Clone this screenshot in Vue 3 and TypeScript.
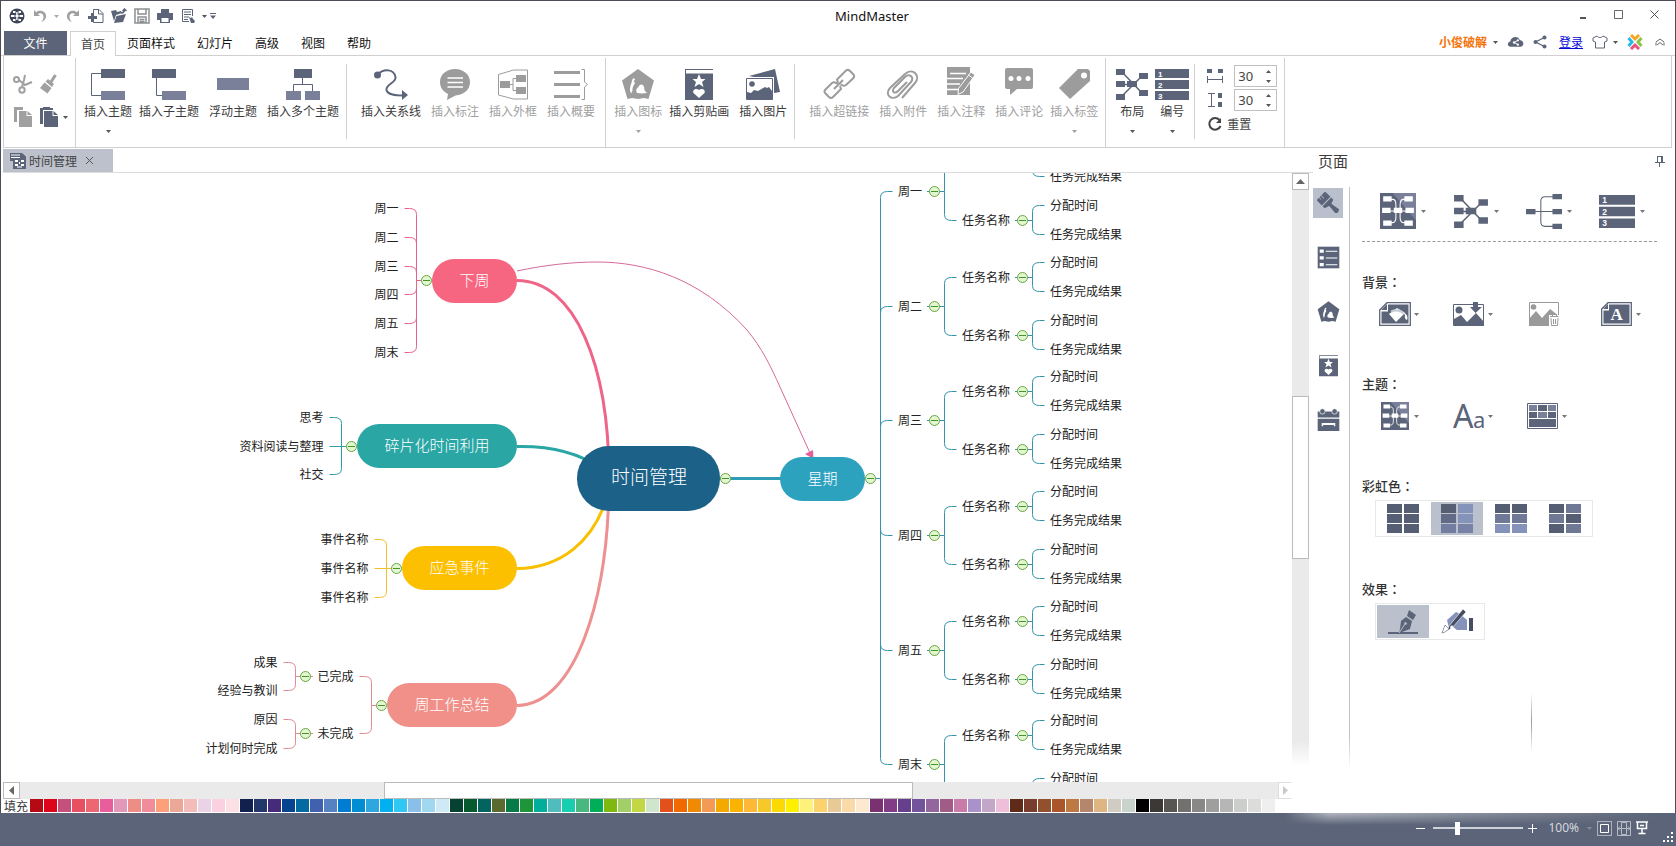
<script setup lang="ts">
import { h, ref } from 'vue'

interface Tool { label: string; icon: string; off?: boolean; drop?: boolean }
interface Group { tools: Tool[]; full: boolean; lead: 'wide' | 'slim' | 'mid' }
interface Label { x: number; y: number; text: string; end?: boolean }

const lettered: Record<string, { box: string; texts: [number, number, string, string, number][] }> = {
  numbering: { box: '0 0 34 34', texts: [
    [3, 9.5, '1', 'Liberation Sans', 8], [3, 20.5, '2', 'Liberation Sans', 8], [3, 31.5, '3', 'Liberation Sans', 8],
  ] },
  watermark: { box: '0 0 32 24', texts: [[9.5, 18, 'A', 'Liberation Serif', 17]] },
  fonts: { box: '0 0 32 28', texts: [[0, 26, 'A', 'Noto Sans', 32], [20, 26, 'a', 'Noto Sans', 22]] },
}

// An icon from the symbol sheet, with its letters drawn on top where it has any.
const Glyph = (props: { name: string }) => {
  const info = lettered[props.name]
  if (!info) return h('svg', {}, [h('use', { href: '#' + props.name })])
  const solo = props.name === 'fonts'
  return h('svg', { viewBox: info.box }, [
    solo ? null : h('use', { href: '#' + props.name }),
    ...info.texts.map(([x, y, text, family, size]) => h('text', {
      x, y, fill: solo ? 'currentColor' : '#fff', 'font-family': family + ', sans-serif', 'font-size': size,
      'font-weight': solo ? 400 : 700,
    }, text)),
  ])
}
Glyph.props = ['name']

const menus = ['首页', '页面样式', '幻灯片', '高级', '视图', '帮助']
const active = ref('首页')

const groups: Group[] = [
  { full: false, lead: 'slim', tools: [
    { label: '插入主题', icon: 'topic', drop: true },
    { label: '插入子主题', icon: 'subtopic' },
    { label: '浮动主题', icon: 'floating' },
    { label: '插入多个主题', icon: 'multi' },
  ] },
  { full: true, lead: 'wide', tools: [
    { label: '插入关系线', icon: 'relation' },
    { label: '插入标注', icon: 'callout', off: true },
    { label: '插入外框', icon: 'boundary', off: true },
    { label: '插入概要', icon: 'summary', off: true },
  ] },
  { full: false, lead: 'slim', tools: [
    { label: '插入图标', icon: 'mark', off: true, drop: true },
    { label: '插入剪贴画', icon: 'clipart' },
    { label: '插入图片', icon: 'picture' },
  ] },
  { full: true, lead: 'wide', tools: [
    { label: '插入超链接', icon: 'link', off: true },
    { label: '插入附件', icon: 'clip', off: true },
    { label: '插入注释', icon: 'note', off: true },
    { label: '插入评论', icon: 'comment', off: true },
    { label: '插入标签', icon: 'tag', off: true, drop: true },
  ] },
  { full: false, lead: 'mid', tools: [
    { label: '布局', icon: 'layout', drop: true },
    { label: '编号', icon: 'numbering', drop: true },
  ] },
]

const spacingX = ref('30')
const spacingY = ref('30')
const bump = (v: string, d: number) => String(Number(v) + d)
const zoom = ref(20)

const quick = ['undo', 'caret', 'redo', 'newdoc', 'open', 'save', 'print', 'export', 'caret', 'more']
const quickNames = ['撤销', '撤销列表', '重做', '新建', '打开', '保存', '打印', '导出', '导出选项', '自定义']
const quickOff = (i: number) => i < 3

const strip = [
  { icon: 'brush', name: '页面' }, { icon: 'outline', name: '大纲' }, { icon: 'mark', name: '图标' },
  { icon: 'clipart', name: '剪贴画' }, { icon: 'calendar', name: '任务' },
]
const layoutTools = [
  { icon: 'map-tile', name: '样式' }, { icon: 'layout', name: '布局' },
  { icon: 'connector', name: '连接线' }, { icon: 'numbering', name: '编号' },
]
const backTools = [
  { icon: 'bg-fill', name: '背景颜色', drop: true }, { icon: 'bg-image', name: '背景图片', drop: true },
  { icon: 'bg-remove', name: '删除背景', drop: false }, { icon: 'watermark', name: '水印', drop: true },
]
const themeTools = [
  { icon: 'map-tile', name: '主题' }, { icon: 'fonts', name: '主题字体' }, { icon: 'theme-colors', name: '主题颜色' },
]
const D = '#555e73'
const M = '#6f7894'
const L = '#8592b9'
const rainbow = [
  [D, D, D, D, D, D], [D, L, '#626b86', L, '#737da0', '#7782a6'],
  [D, D, M, M, L, L], [D, M, M, D, D, M],
]
const rainbowOn = ref(1)
const effectOn = ref(0)

const palette = [
  'b50a14', 'dc0519', 'c5507c', 'e85062', 'ec6772', 'e85d9c', 'e397b9', 'ee8c86', 'f18d9a', 'fd9f78', 'eca897', 'f4bcb8', 'ead3e6', 'fbd0e0', 'fde0e6',
  '10214f', '22386b', '452b79', '05448f', '036aa2', '4160ae', '5681c2', '007cd2', '008dd2', '2ea7e0', '00b0f0', '31c7f4', '8abfea', 'a0d8f0', 'cdeaf6',
  '064232', '075a2d', '03635f', '5b6b30', '067a47', '1d963a', '00ae9c', '50bcbe', '16cfae', '48b880', '00ae57', '7fb80e', 'a3cf68', 'c1d743', 'cfe6cc',
  'e3501a', 'f06a00', 'f08a05', 'f39a55', 'f4a900', 'fab300', 'fdb936', 'f6c829', 'fcd900', 'fff000', 'fff27b', 'fbd26b', 'e8ca97', 'fbdaaa', 'fde9cf',
  '7a3071', '823c86', '66408f', '73549a', '93679d', 'a05b86', 'c97caa', 'aa91ca', 'c3a6c8', 'eebfd8',
  '602a19', '783d2c', '93502c', 'ab562a', 'bd7941', 'b5866b', 'dfb682', 'd0ccc3', 'c7d3cb',
  '000000', '3b3835', '575653', '72716f', '888886', '9f9f9e', 'b5b6b5', 'cbcecb', 'dcdddb', 'efefef',
].map(c => '#' + c)

const lines: { d: string; c: string }[] = []
const labels: Label[] = []
const toggles: { x: number; y: number }[] = []
const snap = (y: number) => Math.floor(y) + 0.5

function branch(trunk: number, from: number, ys: number[], dir: number, c: string, stub: number) {
  let d = `M${stub} ${from}H${trunk}`
  for (const y of ys) {
    d += y === from
      ? `M${trunk} ${y}H${trunk + dir * 12}`
      : `M${trunk} ${from}V${y + (from > y ? 6 : -6)}Q${trunk} ${y} ${trunk + dir * 7} ${y}H${trunk + dir * 12}`
  }
  lines.push({ d, c })
}
function leftLeaves(trunk: number, from: number, ys: number[], names: string[], c: string) {
  branch(trunk, from, ys, -1, c, trunk + 10)
  names.forEach((text, i) => labels.push({ x: trunk - 18, y: ys[i], text, end: true }))
  toggles.push({ x: trunk + 10, y: from })
}

leftLeaves(416.5, 280.5, [208.5, 237.5, 266.5, 294.5, 323.5, 352.5], ['周一', '周二', '周三', '周四', '周五', '周末'], '#e8638a')
leftLeaves(341.5, 446.5, [417.5, 446.5, 474.5], ['思考', '资料阅读与整理', '社交'], '#2f9ea6')
leftLeaves(386.5, 568.5, [539.5, 568.5, 597.5], ['事件名称', '事件名称', '事件名称'], '#f2c029')
leftLeaves(371.5, 705.5, [676.5, 733.5], ['已完成', '未完成'], '#e08a94')
leftLeaves(295.5, 676.5, [662.5, 690.5], ['成果', '经验与教训'], '#e08a94')
leftLeaves(295.5, 733.5, [719.5, 748.5], ['原因', '计划何时完成'], '#e08a94')
lines.push({ d: 'M304 676.5H313M304 733.5H313', c: '#e08a94' })

const teal = '#3494ac'
const dayNames = ['周一', '周二', '周三', '周四', '周五', '周末']
const dayYs = dayNames.map((_, i) => snap(191.4 + i * 114.7))
branch(880.5, 478.5, dayYs, 1, teal, 866)
toggles.push({ x: 870.5, y: 478.5 }, { x: 725.5, y: 478.5 })
dayNames.forEach((text, i) => {
  const y = dayYs[i]
  labels.push({ x: 898, y, text })
  toggles.push({ x: 934.5, y })
  const tasks = [snap(y - 28.7), snap(y + 28.7)]
  branch(944.5, y, tasks, 1, teal, 927)
  tasks.forEach(t => {
    labels.push({ x: 962, y: t, text: '任务名称' })
    toggles.push({ x: 1022.5, y: t })
    const leaves = [snap(t - 14.6), snap(t + 14.3)]
    branch(1032.5, t, leaves, 1, teal, 1015)
    labels.push({ x: 1050, y: leaves[0], text: '分配时间' }, { x: 1050, y: leaves[1], text: '任务完成结果' })
  })
})

const topics = [
  { x: 432, y: 259, w: 85, text: '下周', c: '#f76681' },
  { x: 357, y: 424, w: 160, text: '碎片化时间利用', c: '#2aa6a5' },
  { x: 402, y: 546, w: 115, text: '应急事件', c: '#fdc000' },
  { x: 387, y: 683, w: 130, text: '周工作总结', c: '#f09089' },
  { x: 780, y: 457, w: 85, text: '星期', c: '#2da2bf' },
]
</script>

<template>
  <div class="window">
    <svg class="defs" width="0" height="0" aria-hidden="true">
      <symbol id="caret" viewBox="0 0 5 3"><path d="M0 0h5L2.5 3z" fill="currentColor" /></symbol>
      <symbol id="logo" viewBox="0 0 16 16">
        <circle cx="8" cy="8" r="7.5" fill="#3f4657" />
        <g fill="#fff"><path d="M4 3h2.500v2H4zM9.500 3H12v2H9.500zM2 7h3v2H2zM11 7h3v2h-3zM4 11h2.500v2H4zM9.500 11H12v2H9.500z" /><path d="M7 4h.8v3h.6V4h.8v3.500H11v1H9.200V12h-.8V9h-.6v3H7V8.500H5v-1h2z" /></g>
      </symbol>
      <symbol id="undo" viewBox="0 0 16 16"><path d="M2 2v6h6L5.800 6C9 4 12 6 11.500 9.500c-.2 1.800-1 3.300-2.500 4.500 3.500-1 5.500-3.600 5-6.800C13.300 3 8 1.200 4.200 4.200z" fill="currentColor" /></symbol>
      <symbol id="redo" viewBox="0 0 16 16"><path d="M14 2v6H8l2.200-2C7 4 4 6 4.500 9.500c.2 1.800 1 3.300 2.500 4.500-3.500-1-5.500-3.600-5-6.800C2.700 3 8 1.200 11.800 4.200z" fill="currentColor" /></symbol>
      <symbol id="newdoc" viewBox="0 0 16 16"><path d="M5.500 6V1.500H11l4 4v9H5.500V13M10.500 1.500V6H15" fill="none" stroke="currentColor" /><path d="M3 5h3v3h3v3H6v3H3v-3H0V8h3z" fill="currentColor" /></symbol>
      <symbol id="open" viewBox="0 0 16 16"><path d="M0 3l5-1 1 2 4-1 1 2-6 2-2 6z M5.500 8L15 6l-3 8-9 1z" fill="currentColor" /><path d="M10 5c2.500 0 3.500-1.500 3.500-3.500M11.500 3l2-2L15.500 3" fill="none" stroke="currentColor" stroke-width="1.500" /></symbol>
      <symbol id="save" viewBox="0 0 16 16"><path d="M1 1h14v14H1zM4 1v5h8V1M4 15V9h8v6M5.500 11.500h5M5.500 13.500h5" fill="none" stroke="#8d8f90" stroke-width="1.500" /></symbol>
      <symbol id="print" viewBox="0 0 16 16"><path d="M4 1h8v4h4v7h-3v3H3v-3H0V5h4z" fill="currentColor" /><path d="M4.500 10h7v4h-7z" fill="#fff" /></symbol>
      <symbol id="export" viewBox="0 0 16 16"><path d="M12.500 8V1.500h-10v12H9M4 4h7M4 6.500h7M4 9h5M4 11.500h4" fill="none" stroke="currentColor" /><path d="M9 9l2 1 1-1 1 2 2 2-1 2h-3z" fill="currentColor" /></symbol>
      <symbol id="more" viewBox="0 0 6 6"><path d="M0 0h6v1H0zM0 2.500h6L3 6z" fill="currentColor" /></symbol>

      <symbol id="cut" viewBox="0 0 20 20"><g fill="none" stroke="currentColor" stroke-width="2"><circle cx="3.500" cy="5.500" r="2.500" /><circle cx="9" cy="16" r="2.700" /><path d="M6 6l6 5 7-3M9 13l2-7 1-5" /></g></symbol>
      <symbol id="paint" viewBox="0 0 20 20"><path d="M16.500 1L12 8" stroke="currentColor" stroke-width="3" /><path d="M6.500 7.500L9 5l6 5-2 3zM5.500 8.500l7 5.500-4 5.500L1 14z" fill="currentColor" /></symbol>
      <symbol id="copy" viewBox="0 0 20 20"><path d="M1 0h9v3H4v12H1z" fill="currentColor" /><path d="M6 4h7.500v5H19v11H6z" fill="currentColor" /><path d="M14.500 4L19 8h-4.500z" fill="currentColor" /></symbol>
      <symbol id="paste" viewBox="0 0 20 20"><path d="M1 1h3V0h7v1h3v2H4v14H1z" fill="currentColor" /><path d="M5 4h8.500v5H19v11H5z" fill="currentColor" /><path d="M14.500 4L19 8h-4.500z" fill="currentColor" /></symbol>

      <symbol id="topic" viewBox="0 0 34 34"><path d="M10 6.500H.5v22H10" fill="none" stroke="currentColor" /><path d="M10 2h24v9H10z" fill="currentColor" /><path d="M10 24h24v9H10z" fill="#7a809a" /></symbol>
      <symbol id="subtopic" viewBox="0 0 34 34"><path d="M4.500 10v18.500H11" fill="none" stroke="currentColor" /><path d="M0 2h24v9H0z" fill="currentColor" /><path d="M10 24h24v9H10z" fill="#7a809a" /></symbol>
      <symbol id="floating" viewBox="0 0 34 34"><path d="M1 11h32v12H1z" fill="#7a809a" /></symbol>
      <symbol id="multi" viewBox="0 0 34 34"><path d="M16.500 10v7M7.500 25v-7.500h19V25" fill="none" stroke="currentColor" /><path d="M8 2h18v9H8z" fill="currentColor" /><path d="M0 24h15v9H0zM19 24h15v9H19z" fill="#7a809a" /></symbol>
      <symbol id="relation" viewBox="0 0 34 34"><circle cx="3.500" cy="8" r="3.500" fill="currentColor" /><path d="M3 8C10 1 20 2 21.500 10c1 6-10 7-9 13 1 5 9 5.500 17 5.500" fill="none" stroke="currentColor" stroke-width="2" /><path d="M28 23l6 5-6 5z" fill="currentColor" /></symbol>
      <symbol id="callout" viewBox="0 0 34 34"><path d="M17 2c8.500 0 15 5.500 15 13 0 8-6.500 13-14.500 13.500L9 33l1-6C5 24.500 2 20.500 2 15 2 7.500 8.500 2 17 2z" fill="currentColor" /><path d="M9.500 11H25M9.500 15.500H25M9.500 20H25" stroke="#fff" stroke-width="1.500" /></symbol>
      <symbol id="boundary" viewBox="0 0 34 34"><path d="M2.500 7.500l15-4.500h14v29h-14l-15-4zM13 17.500h4M20 11.500h-3v12h3" fill="none" stroke="currentColor" /><path d="M4 14h10v7H4zM20 8h10v7H20zM20 20h10v7H20z" fill="currentColor" /></symbol>
      <symbol id="summary" viewBox="0 0 34 34"><path d="M0 4h26v3H0zM0 16h26v3H0zM0 28h26v3H0z" fill="currentColor" /><path d="M27.500 2.500h3V15l3 2.500-3 2.500v12.500h-3" fill="none" stroke="currentColor" /></symbol>
      <symbol id="mark" viewBox="0 0 34 34"><path d="M17 2l16 11.500L27.500 32l-4.500-1-6 1-6-1-4.500 1L1 13.500z" fill="currentColor" /><path d="M11 13.500q1-3.500 3-1.500-.5 2-1.500 2 2 1 1 3-1.500 2-2 4.500.5 3-1.500 5-2-4-.5-8 1-2 1.500-5zM16 26c-1.500-3-.5-4.500 1.500-6 .5-3.500 5-3.500 5.500 0 .5 1.500 0 3 1 4l2 2-5 .5z" fill="#fff" /></symbol>
      <symbol id="clipart" viewBox="0 0 34 34"><path d="M3 2h28v1H4v3.500h27V33H3z" fill="currentColor" /><path d="M17 7l2 5h4.500L20 15l1.500 5-4.500-3-4.500 3L14 15l-3.500-3H15zM17 31l-5.500-5c-1.500-3 2.500-5.500 5.500-3 3-2.500 7 0 5.500 3z" fill="#fff" /></symbol>
      <symbol id="picture" viewBox="0 0 34 34"><path d="M3 9l26-7 5 23-6 1V10H8z" fill="currentColor" /><path d="M.5 11.500h26v21H.5z" fill="#fff" stroke="currentColor" /><circle cx="6" cy="17" r="2.800" fill="currentColor" /><path d="M1 25l4 1 3-3 4 1 7-4 2 1 2-1 3 4v8H1z" fill="currentColor" /></symbol>
      <symbol id="link" viewBox="0 0 34 34"><g fill="none" stroke="currentColor" stroke-width="2"><path d="M16 15.500l-1-3L24 3.500q2-1.500 4 .5l3 3q2 2 .5 4L24 18q-2 1.500-4 0l-1.500-.5M18 19l1 3-8 8q-2 2-4 0l-3.500-3.500q-2-2 0-4L10 16q2-1.500 4 0l2 .5M12 22l9-9" /></g></symbol>
      <symbol id="clip" viewBox="0 0 34 34"><path d="M16 31L29 16c6-7-2-16-10-9L4 21c-6 7 2 13 8 8l13-14c4-5-2-9-6-5L8 21c-3 4 1 6 4 3l9-9" fill="none" stroke="currentColor" stroke-width="2" /></symbol>
      <symbol id="note" viewBox="0 0 34 34"><path d="M3 0h23v28H3z" fill="currentColor" /><path d="M6 6.500h16M3 11.500h16M3 17h13M3 22.500h12" stroke="#fff" stroke-width="1.500" /><path d="M27 5l4 3-12 17-5 2.500.5-6z" fill="currentColor" stroke="#fff" /><path d="M24.500 8l4 3" stroke="#fff" /></symbol>
      <symbol id="comment" viewBox="0 0 34 34"><path d="M5 1h24q2 0 2 2v17q0 2-2 2H15l-7 6v-6H5q-2 0-2-2V3q0-2 2-2z" fill="currentColor" /><g fill="#fff"><circle cx="9" cy="11.500" r="2.500" /><circle cx="17" cy="11.500" r="2.500" /><circle cx="26" cy="11.500" r="2.500" /></g></symbol>
      <symbol id="tag" viewBox="0 0 34 34"><path d="M21 2h10l2 2v10L13 32 2 21z" fill="currentColor" /><circle cx="27" cy="8.500" r="3" fill="#fff" /></symbol>
      <symbol id="layout" viewBox="0 0 34 34"><path d="M7 5l20 21M7 29L27 9M8 17.500h10" fill="none" stroke="currentColor" stroke-width="1.500" /><path d="M1 2h9v6H1zM1 14h9v6H1zM1 27h9v6H1zM12 14h10v6H12zM24 6h9v6h-9zM24 23h9v6h-9z" fill="currentColor" /></symbol>
      <symbol id="numbering" viewBox="0 0 34 34"><path d="M0 2h34v9H0zM0 13h34v9H0zM0 24h34v9H0z" fill="currentColor" /></symbol>
      <symbol id="space-x" viewBox="0 0 16 16"><path d="M0 1h5v4H0zM11 1h5v4h-5z" fill="currentColor" /><path d="M.5 8v7M15.500 8v7M0 11.500h16" stroke="currentColor" fill="none" /></symbol>
      <symbol id="space-y" viewBox="0 0 16 16"><path d="M11 1h4v5h-4zM11 10h4v5h-4z" fill="currentColor" /><path d="M1 1.500h7M1 14.500h7M4.500 1v13" stroke="currentColor" fill="none" /></symbol>
      <symbol id="reset" viewBox="0 0 16 16"><path d="M12.500 4A5.800 5.800 0 1 0 13.500 10" fill="none" stroke="currentColor" stroke-width="2" /><path d="M14 2v5H9z" fill="currentColor" /></symbol>

      <symbol id="cloud" viewBox="0 0 18 14"><path d="M4 12C0 12 0 7 3.500 6.500 4 1 12 0 13.500 5c5 .5 5 7 .5 7z" fill="currentColor" /><path d="M7.500 7.500l4-2.200M7.500 7.500l4 2.200" stroke="#fff" /><g fill="#fff"><circle cx="7.500" cy="7.500" r="1.300" /><circle cx="11.500" cy="5.200" r="1.200" /><circle cx="11.500" cy="9.800" r="1.200" /></g></symbol>
      <symbol id="share" viewBox="0 0 14 14"><path d="M11.500 2.500L2.500 7l9 4.500" fill="none" stroke="currentColor" stroke-width="1.300" /><g fill="currentColor"><circle cx="11.500" cy="2.500" r="2" /><circle cx="2.500" cy="7" r="2" /><circle cx="11.500" cy="11.500" r="2" /></g></symbol>
      <symbol id="shirt" viewBox="0 0 16 14"><path d="M5 1c1.500 2 4.500 2 6 0l4 2v3l-2.500 1v6h-9V7L1 6V3z" fill="none" stroke="currentColor" stroke-linejoin="round" /></symbol>
      <symbol id="brand" viewBox="0 0 16 16"><g fill="none" stroke-width="3"><path d="M4 1l4 4 4-4" stroke="#f5a623" /><path d="M1.500 4L5 8l-3.500 4" stroke="#29b6e8" /><path d="M14.500 4L11 8l3.500 4" stroke="#8bc34a" /><path d="M4 15l4-4 4 4" stroke="#e8517c" /></g></symbol>
      <symbol id="pin" viewBox="0 0 10 12"><path d="M2.500 1v6.500M2 1.500h5M0 7.500h10M4.500 8v4" stroke="currentColor" fill="none" /><path d="M6 1h2v7H6z" fill="currentColor" /></symbol>
      <symbol id="doc" viewBox="0 0 16 16"><path d="M0 0h12l4 3.500V16H3V8H0z" fill="currentColor" /><path d="M1 1.500h9v1H1zM1 4h9v1H1zM5 7h3v2H5zM11 7h3v2h-3zM5 11h3v2H5zM11 11h3v2h-3zM7 13.500h5v1H7zM9 9h1v2H9z" fill="#fff" /></symbol>

      <symbol id="brush" viewBox="0 0 34 34"><g transform="rotate(-45 17 17)" fill="currentColor"><path d="M8 1h5v4h1V1h3v6h1V1h8v11H8zM8 13.500h18V18l-6 2v2l2 12q-5 4-8 0l1-12v-2l-7-2z" /></g></symbol>
      <symbol id="outline" viewBox="0 0 34 34"><path d="M1 1h32v32H1z" fill="currentColor" /><path d="M4 5h6v5H4zM4 15h6v5H4zM4 25h6v5H4zM13 7h17v1.500H13zM13 17h17v1.500H13zM13 27h17v1.500H13z" fill="#fff" /></symbol>
      <symbol id="calendar" viewBox="0 0 34 34"><path d="M1 5h32v9H1zM1 16h32v18H1z" fill="currentColor" /><g fill="currentColor" stroke="#fff"><circle cx="8" cy="5" r="4" /><circle cx="26" cy="5" r="4" /></g><path d="M7 22h20v5h-2v-2H9v2H7z" fill="#fff" /></symbol>
      <symbol id="map-tile" viewBox="0 0 34 34"><path d="M0 0h34v34H0z" fill="#5b6478" /><path d="M12 0h22v26z" fill="#7a809a" /><path d="M7 6h5q3 0 3 5v12q0 5-3 5H7M27 6h-5q-3 0-3 5v12q0 5 3 5h5M7 17h20" fill="none" stroke="#fff" /><path d="M3 3h8v5H3zM23 3h8v5h-8zM2 14h8v5H2zM24 14h8v5h-8zM3 26h8v5H3zM23 26h8v5h-8zM13 14h8v5h-8z" fill="#fff" /></symbol>
      <symbol id="connector" viewBox="0 0 34 34"><path d="M8 17.500h18M26 3.500h-8q-4 0-4 4v20q0 4 4 4h8" fill="none" stroke="currentColor" /><path d="M0 15h9v5H0zM25 1h9v5h-9zM25 15h9v5h-9zM25 29h9v5h-9z" fill="currentColor" /></symbol>
      <symbol id="bg-fill" viewBox="0 0 32 24"><path d="M.7 8L8 .7h23.300v22.600H.7z" fill="#fff" stroke="currentColor" stroke-width="1.300" /><path d="M9 2.500h20.500v19H2.500V9.500H9zM8 2v6H2z" fill="currentColor" /><path d="M10 12l8-6 8 5-9 9z" fill="#fff" /><path d="M12 9.500q8-3 13 2" fill="none" stroke="#c5cad4" stroke-width="2" /><path d="M24 10q6 3 4 8-3-1-2-5z" fill="#fff" /></symbol>
      <symbol id="bg-image" viewBox="0 0 32 24"><path d="M.5 2.500h30v21H.5z" fill="none" stroke="currentColor" /><circle cx="6" cy="8" r="3.500" fill="currentColor" /><path d="M1 17l7-4 6 7 9-9 8 9v4H1zM20 0h5v5h4l-6.500 6L17 5h3z" fill="currentColor" /></symbol>
      <symbol id="bg-remove" viewBox="0 0 32 24"><g color="#9a9a9a"><path d="M2.500.5h29v22h-29z" fill="none" stroke="currentColor" /><circle cx="6.500" cy="5" r="2.800" fill="currentColor" /><path d="M2 17l7-8 6 7 8-9 9 7v10H2z" fill="currentColor" /><path d="M22 13h10v11H22z" fill="#fff" /><path d="M23 14.500h8.500M25.500 14v-1.500h4V14M24 16l.5 7.500h6L31 16M26.500 17v5M28.500 17v5" fill="none" stroke="currentColor" /></g></symbol>
      <symbol id="watermark" viewBox="0 0 32 24"><path d="M.7 7L7 .7h23.300v22.600H.7z" fill="#fff" stroke="currentColor" stroke-width="1.300" /><path d="M8 2.500h20.500v19H2.500V8.500H8zM7 2v5H2z" fill="currentColor" /></symbol>
      <symbol id="theme-colors" viewBox="0 0 32 28"><path d="M.5 1.500h30v25H.5z" fill="#fff" stroke="currentColor" /><path d="M11 3h9v6h-9zM2 10h8v6H2zM21 10h8v6h-8zM2 17h27v8H2z" fill="currentColor" /><path d="M2 3h8v6H2zM21 3h8v6h-8zM11 10h9v6h-9z" fill="#7a809a" /></symbol>
      <symbol id="pen" viewBox="0 0 32 26"><path d="M1 23h30v2H1z" fill="currentColor" /><path d="M22 1l7 5-3 5-6-4zM19 8l6 4-2 8-8 3-3 1 1-4 1-8z" fill="currentColor" /><path d="M12 24l6-9" stroke="#bbc0cd" /><circle cx="18.500" cy="14.500" r="1.300" fill="#bbc0cd" /></symbol>
      <symbol id="hand" viewBox="0 0 32 26"><path d="M6 11l9-8 4 2 7 6v10H16l-4-3-4 1z" fill="#8592b9" /><path d="M22 0l3 3L11 19l-5 3 2-5z" fill="#454d62" stroke="#fff" stroke-width=".6" /><path d="M1 24l3-8 4 4-4 3z" fill="#fff" stroke="#7a809a" stroke-width=".8" /><path d="M9 18l2-2 2 3-3 2z" fill="#fff" /><path d="M28 9h4v13h-4z" fill="#454d62" /></symbol>
    </svg>

    <header class="titlebar">
      <div class="quick">
        <svg class="i16"><use href="#logo" /></svg>
        <button v-for="(q, i) in quick" :key="i" :class="['flat', q, { faded: quickOff(i) }]" :aria-label="quickNames[i]">
          <svg :class="q === 'caret' ? 'arrow' : q === 'more' ? 'i6' : 'i16'"><use :href="'#' + q" /></svg>
        </button>
      </div>
      <h1>MindMaster</h1>
      <div class="winctl">
        <button class="flat" aria-label="最小化"><svg width="11" height="11"><path d="M3 8h6v2H3z" fill="#555" /></svg></button>
        <button class="flat" aria-label="最大化"><svg width="11" height="11"><path d="M1.500 1.500h8v8h-8z" fill="none" stroke="#666" /></svg></button>
        <button class="flat" aria-label="关闭"><svg width="11" height="11"><path d="M1.500 1.500l8 8M9.500 1.500l-8 8" stroke="#555" /></svg></button>
      </div>
    </header>

    <nav class="menubar">
      <button class="file">文件</button>
      <button v-for="m in menus" :key="m" :class="['menu', { on: m === active }]" @click="active = m">{{ m }}</button>
      <div class="account">
        <button class="flat user">小俊破解<svg class="arrow"><use href="#caret" /></svg></button>
        <button class="flat" aria-label="云分享"><svg class="cloud"><use href="#cloud" /></svg></button>
        <button class="flat" aria-label="分享"><svg class="i14"><use href="#share" /></svg></button>
        <a href="#login">登录</a>
        <button class="flat skin" aria-label="皮肤"><svg class="i16"><use href="#shirt" /></svg><svg class="arrow"><use href="#caret" /></svg></button>
        <button class="flat" aria-label="亿图"><svg class="i16"><use href="#brand" /></svg></button>
        <button class="flat fold" aria-label="收起"><svg width="10" height="8"><path d="M1 4l4-3 4 3M1 7.500v-3M9 7.500v-3M2 7l3-2.500L8 7" fill="none" stroke="#666" /></svg></button>
      </div>
    </nav>

    <div class="ribbon">
      <div class="clipboard">
        <button class="flat faded" aria-label="剪切"><svg class="i20"><use href="#cut" /></svg></button>
        <button class="flat faded" aria-label="格式刷"><svg class="i20"><use href="#paint" /></svg></button>
        <button class="flat faded" aria-label="复制"><svg class="i20"><use href="#copy" /></svg></button>
        <button class="flat" aria-label="粘贴"><svg class="i20"><use href="#paste" /></svg><svg class="arrow"><use href="#caret" /></svg></button>
      </div>
      <div v-for="(g, gi) in groups" :key="gi" :class="['group', g.lead, { full: g.full }]">
        <button v-for="t in g.tools" :key="t.label" :class="['tool', { off: t.off, drop: t.drop }]">
          <Glyph class="i34" :name="t.icon" />
          <span>{{ t.label }}</span>
          <svg v-if="t.drop" class="arrow"><use href="#caret" /></svg>
        </button>
      </div>
      <div class="spacing">
        <div class="row">
          <svg class="i16"><use href="#space-x" /></svg>
          <div class="spin">
            <input v-model="spacingX" aria-label="水平间距">
            <div><button aria-label="增加水平间距" @click="spacingX = bump(spacingX, 1)"><svg class="arrow up"><use href="#caret" /></svg></button><button aria-label="减少水平间距" @click="spacingX = bump(spacingX, -1)"><svg class="arrow"><use href="#caret" /></svg></button></div>
          </div>
        </div>
        <div class="row">
          <svg class="i16"><use href="#space-y" /></svg>
          <div class="spin">
            <input v-model="spacingY" aria-label="垂直间距">
            <div><button aria-label="增加垂直间距" @click="spacingY = bump(spacingY, 1)"><svg class="arrow up"><use href="#caret" /></svg></button><button aria-label="减少垂直间距" @click="spacingY = bump(spacingY, -1)"><svg class="arrow"><use href="#caret" /></svg></button></div>
          </div>
        </div>
        <button class="flat reset"><svg class="i16"><use href="#reset" /></svg>重置</button>
      </div>
    </div>

    <main class="work">
      <section class="editor">
        <div class="doctabs">
          <div class="doctab">
            <svg class="i16"><use href="#doc" /></svg><span>时间管理</span>
            <button class="flat" aria-label="关闭文档"><svg width="9" height="9"><path d="M1 1l7 7M8 1L1 8" stroke="#555" /></svg></button>
          </div>
        </div>
        <div class="stage">
          <svg class="canvas" role="img" aria-label="时间管理思维导图">
            <g transform="translate(-3 -173)">
              <g fill="none" stroke-width="3">
                <path d="M517 280.500C575 280.500 609 365 609 478" stroke="#ef6588" />
                <path d="M517 446.500C545 446 575 450 600 468" stroke="#2aa6a5" />
                <path d="M517 568.500C562 568 593 540 606 500" stroke="#f8c000" />
                <path d="M517 705.500C575 705 609 600 609 478" stroke="#ee9090" />
                <path d="M720 478.500H782" stroke="#2d9cb4" />
              </g>
              <path v-for="(l, i) in lines" :key="'l' + i" :d="l.d" :stroke="l.c" fill="none" />
              <path d="M517 271C545 265 572 262 597 262C645 262 700 278 747 330C762 348 771 367 780 387L810 453" fill="none" stroke="#d5699b" />
              <path d="M805 454l8-4 .5 9z" fill="#e8609a" />
              <g v-for="(t, i) in toggles" :key="'t' + i">
                <circle :cx="t.x" :cy="t.y" r="5" fill="#e0f7d0" stroke="#6ba644" />
                <path :d="`M${t.x - 3.5} ${t.y}h7`" stroke="#4d8f2c" />
              </g>
              <g v-for="t in topics" :key="t.text">
                <rect :x="t.x" :y="t.y" :width="t.w" height="44" rx="22" :fill="t.c" />
                <text class="topic" :x="t.x + t.w / 2" :y="t.y + 27">{{ t.text }}</text>
              </g>
              <rect x="577" y="446" width="143" height="65" rx="32" fill="#1c6188" />
              <text class="root" x="649" y="484">时间管理</text>
              <text v-for="(t, i) in labels" :key="'n' + i" :class="['leaf', { end: t.end }]" :x="t.x" :y="t.y + 4">{{ t.text }}</text>
            </g>
          </svg>
          <div class="vscroll">
            <button aria-label="向上滚动"><svg width="9" height="5"><path d="M0 5h9L4.500 0z" fill="#666" /></svg></button>
            <i class="before"></i><i class="thumb"></i><i class="after"></i>
          </div>
        </div>
        <div class="hscroll">
          <button aria-label="向左滚动"><svg width="5" height="9"><path d="M5 0v9L0 4.500z" fill="#666" /></svg></button>
          <i class="before"></i><i class="thumb"></i><i class="after"></i>
          <button class="pale" aria-label="向右滚动"><svg width="5" height="9"><path d="M0 0v9l5-4.500z" fill="#c9c9c9" /></svg></button>
        </div>
        <div class="palette">
          <span>填充</span>
          <button v-for="(c, i) in palette" :key="i" :style="{ background: c }" :aria-label="'填充 ' + c"></button>
        </div>
      </section>

      <aside class="side">
        <div class="sidehead"><h2>页面</h2><button class="flat" aria-label="固定"><svg width="10" height="12"><use href="#pin" /></svg></button></div>
        <div class="sidebody">
          <div class="strip">
            <button v-for="(s, i) in strip" :key="s.icon" :class="{ on: i === 0 }" :aria-label="s.name"><svg><use :href="'#' + s.icon" /></svg></button>
          </div>
          <div class="props">
            <div class="tools big">
              <button v-for="t in layoutTools" :key="t.icon" class="flat" :aria-label="t.name"><Glyph class="i36" :name="t.icon" /><svg class="arrow"><use href="#caret" /></svg></button>
            </div>
            <hr>
            <h3 class="first">背景<b>：</b></h3>
            <div class="tools">
              <button v-for="t in backTools" :key="t.icon" class="flat" :aria-label="t.name"><Glyph class="i32" :name="t.icon" /><svg v-if="t.drop" class="arrow"><use href="#caret" /></svg></button>
            </div>
            <h3>主题<b>：</b></h3>
            <div class="tools">
              <button v-for="t in themeTools" :key="t.icon" class="flat" :aria-label="t.name"><Glyph class="i28" :name="t.icon" /><svg class="arrow"><use href="#caret" /></svg></button>
            </div>
            <h3>彩虹色<b>：</b></h3>
            <div class="picker">
              <button v-for="(r, i) in rainbow" :key="i" :class="{ on: i === rainbowOn }" :aria-label="'彩虹色 ' + (i + 1)" @click="rainbowOn = i">
                <svg width="32" height="29"><rect v-for="(c, k) in r" :key="k" :x="(k % 2) * 17" :y="Math.floor(k / 2) * 10" width="15" height="9" :fill="c" /></svg>
              </button>
            </div>
            <h3>效果<b>：</b></h3>
            <div class="picker">
              <button v-for="(e, i) in ['pen', 'hand']" :key="e" :class="{ on: i === effectOn }" :aria-label="'效果 ' + (i + 1)" @click="effectOn = i"><svg width="32" height="26"><use :href="'#' + e" /></svg></button>
            </div>
            <div class="rule"></div>
          </div>
        </div>
      </aside>
    </main>

    <footer class="status">
      <button class="flat" aria-label="缩小"><svg width="9" height="9"><path d="M0 4.500h9" stroke="#fff" /></svg></button>
      <input v-model="zoom" type="range" min="0" max="80" aria-label="缩放">
      <button class="flat" aria-label="放大"><svg width="9" height="9"><path d="M0 4.500h9M4.500 0v9" stroke="#fff" /></svg></button>
      <span class="pct">100%</span><svg class="arrow dim"><use href="#caret" /></svg>
      <button class="flat" aria-label="适合页面"><svg width="15" height="15"><path d="M.5.5h14v14H.5z" fill="none" stroke="#fff" stroke-dasharray="1 1" /><path d="M3.500 3.500h8v8h-8z" fill="none" stroke="#fff" /></svg></button>
      <button class="flat" aria-label="适合宽度"><svg width="14" height="15"><g fill="none" stroke="#b5bac6"><path d="M.5.500h13v14H.5z" /><path d="M4.500 1.500h5v12h-5zM1 7.500h12M3 5.500l-2 2 2 2M11 5.500l2 2-2 2" /></g></svg></button>
      <button class="flat" aria-label="演示"><svg width="12" height="14"><path d="M0 1h12M1.500 1v6.500h9V1M4 4.500h4M6 8v4M2.500 12.500h7" fill="none" stroke="#fff" stroke-width="1.500" /></svg></button>
      <svg class="grip" width="11" height="11"><path d="M8 0h2v2H8zM4 4h2v2H4zM8 4h2v2H8zM0 8h2v2H0zM4 8h2v2H4zM8 8h2v2H8z" fill="#fff" /></svg>
    </footer>
  </div>
</template>

<style>
body { margin: 0; overflow: hidden; }
</style>

<style scoped>
* { box-sizing: border-box; }
.window {
  display: flex; flex-direction: column; height: 100vh; min-width: 1300px;
  border: 1px solid #4a4d58; border-bottom: 0; background: #fff; color: #3c3c3c;
  font: 12px/16px "Noto Sans CJK SC", "Noto Sans", sans-serif;
}
.defs { position: absolute; }
button { margin: 0; padding: 0; border: 0; background: none; color: inherit; font: inherit; }
svg { display: block; flex: none; }
h1, h2, h3 { margin: 0; font-weight: 400; }
.flat { display: flex; align-items: center; color: #5b6478; }
.flat.faded { color: #a0a0a0; }
.i6 { width: 6px; height: 6px; }
.i14 { width: 14px; height: 14px; }
.i16 { width: 16px; height: 16px; }
.i20 { width: 20px; height: 20px; }
.i28 { width: 32px; height: 28px; }
.i32 { width: 32px; height: 24px; }
.i34 { width: 34px; height: 34px; }
.i36 { width: 36px; height: 36px; }
.arrow { width: 5px; height: 3px; color: #555; }
.arrow.up { transform: scaleY(-1); }
.faded .arrow { color: #aaa; }

.titlebar { display: grid; grid-template-columns: 1fr auto 1fr; align-items: center; height: 30px; padding-left: 8px; flex: none; }
.quick { display: flex; align-items: center; gap: 7px; }
.quick .caret { margin: 0 -1px; }
.quick .more { margin-left: -3px; }
.titlebar h1 { padding-left: 60px; font: 13px/18px "Noto Sans", sans-serif; color: #111; }
.winctl { display: flex; justify-content: flex-end; gap: 25px; padding: 0 15px 3px 0; }

.menubar { display: flex; height: 25px; flex: none; padding-left: 3px; border-bottom: 1px solid #d0d0d0; color: #111; }
.file { width: 63px; background: #5b6478; color: #fff; margin-right: 3px; }
.menu { padding: 0 11px; border: solid transparent; border-width: 1px 0; }
.menu.on { padding: 0 10px; border: 1px solid #d0d0d0; border-bottom: 0; background: #fff; margin-bottom: -1px; color: #444; }
.account { display: flex; align-items: center; margin-left: auto; padding: 0 10px 2px 0; gap: 9px; }
.user { gap: 6px; color: #f5740c; font-weight: 700; }
.account a { margin-left: 3px; color: #0a0ad8; text-decoration: underline; }
.cloud { width: 17px; height: 14px; }
.skin { gap: 5px; }
.fold { margin-left: 3px; }

.ribbon { display: flex; height: 92px; flex: none; margin: 0 3px 0 2px; border: solid #d0d0d0; border-width: 0 1px 1px; }
.clipboard { display: grid; grid-template-columns: 26px 26px; align-content: start; row-gap: 13px; width: 72px; padding: 16px 0 0 9px; border-right: 1px solid #d0d0d0; margin-top: 2px; }
.clipboard .flat { gap: 4px; }
.group { display: flex; align-items: flex-start; padding-top: 11px; }
.group:not(.full)::after { content: ""; align-self: stretch; width: 1px; margin: -3px 0 8px; background: #d0d0d0; }
.group.full { margin-top: 2px; padding-top: 9px; border-right: 1px solid #d0d0d0; }
.group.full { margin-left: 0; }
.slim { padding-left: 6px; }
.slim .tool:last-of-type, .mid .tool:last-of-type { margin-right: 2px; }
.wide { padding-left: 9px; padding-right: 5px; }
.mid { padding-left: 6px; }
.mid .tool { min-width: 40px; }
.tool { display: flex; flex-direction: column; align-items: center; padding: 0 5px; white-space: nowrap; color: #5b6478; }
.tool.drop { padding: 0 2px; }
.tool span { margin: 2px 0 11px; color: #3c3c3c; }
.tool.off { color: #9c9c9c; }
.tool.off span, .tool.off .arrow { color: #a0a0a0; }
.spacing { display: flex; flex-direction: column; gap: 2px; width: 90px; padding: 7px 7px 0 12px; margin-top: 2px; border-right: 1px solid #d0d0d0; }
.row { display: flex; align-items: center; justify-content: space-between; color: #5b6478; }
.spin { display: flex; width: 43px; height: 22px; border: 1px solid #c0c0c0; }
.spin input { width: 26px; min-width: 0; padding: 0 0 0 3px; border: 0; outline: 0; font: 13px/18px "Noto Sans", sans-serif; color: #444; }
.spin div { display: flex; flex-direction: column; flex: 1; }
.spin button { display: flex; flex: 1; align-items: center; justify-content: center; }
.reset { gap: 4px; height: 22px; color: #444; }

.work { display: flex; flex: 1; min-height: 0; }
.editor { display: flex; flex-direction: column; flex: 1; min-width: 0; padding-left: 2px; }
.doctabs { display: flex; height: 25px; padding-top: 1px; flex: none; border-bottom: 1px solid #dcdcdc; }
.doctab { display: flex; align-items: center; width: 110px; padding-left: 7px; gap: 3px; background: #bcc1cc; color: #444; }
.doctab .i16 { color: #5b6478; }
.doctab .flat { margin-left: 5px; }
.stage { display: flex; flex: 1; min-height: 0; }
.canvas { flex: 1; width: 100%; height: 100%; min-width: 0; overflow: hidden; }
.leaf { font-size: 12px; fill: #222; }
.leaf.end { text-anchor: end; }
.topic { font-size: 15px; font-weight: 300; fill: #fff; text-anchor: middle; }
.root { font-size: 19px; font-weight: 300; fill: #fff; text-anchor: middle; }
.vscroll { display: flex; flex-direction: column; width: 17px; margin-right: 4px; margin-bottom: 16px; }
.vscroll button, .hscroll button { display: flex; flex: none; align-items: center; justify-content: center; width: 17px; height: 17px; border: 1px solid #bbb; background: #fff; }
.vscroll .before { flex: 206; background: #eaeaea; }
.vscroll .thumb { flex: 162; border: 1px solid #bbb; }
.vscroll .after { flex: 207; background: linear-gradient(#eaeaea 88%, #fff); }
.hscroll { display: flex; height: 17px; flex: none; width: calc(100% - 22px); }
.hscroll .before { flex: 364; background: #eaeaea; }
.hscroll .thumb { flex: 526; border: 1px solid #bbb; }
.hscroll .after { flex: 365; background: #eaeaea; }
.hscroll .pale { width: 13px; border-color: #ddd; border-right: 0; }
.palette { display: flex; align-items: flex-start; gap: 1px; height: 14px; flex: none; }
.palette span { width: 26px; padding-left: 1px; flex: none; line-height: 14px; white-space: nowrap; }
.palette button { flex: none; width: 13px; height: 13px; }

.side { display: flex; flex-direction: column; width: 362px; flex: none; }
.sidehead { display: flex; justify-content: space-between; height: 25px; padding: 0 10px 0 5px; }
.sidehead h2 { font-size: 15px; line-height: 25px; }
.sidebody { display: flex; flex: 1; min-height: 0; }
.strip { display: flex; flex-direction: column; flex: none; gap: 24px; width: 37px; padding-top: 15px; border-right: 1px solid; border-image: linear-gradient(transparent 15px, #c4c4c4 15px, #c4c4c4 88%, transparent 93%) 1; }
.strip button { display: flex; align-items: center; justify-content: center; width: 30px; height: 30px; color: #5b6478; }
.strip button.on { background: #b9bfcc; }
.strip svg { width: 23px; height: 23px; }
.props { flex: 1; min-width: 0; padding: 20px 18px 0 12px; }
.tools { display: grid; grid-template-columns: repeat(3, 74px) auto; justify-content: start; height: 28px; margin: 8px 0 0 17px; }
.tools.big { grid-template-columns: repeat(3, 73px) auto; height: 36px; margin: 0 0 0 18px; }
.tools .flat { gap: 3px; }
.tools.big .flat { gap: 5px; }
.tools .arrow { color: #777; }
hr { margin: 12px 0 0; border: 0; border-top: 1px dashed #999; }
h3 { margin-top: 46px; font-size: 13px; line-height: 20px; font-weight: 500; color: #333; }
h3 b { font-family: "Noto Sans CJK TC", sans-serif; font-weight: 500; }
h3.first { margin-top: 30px; }
.picker { display: flex; width: fit-content; gap: 2px; margin: 4px 0 -4px 13px; padding: 1px; border: 1px solid #e8e8e8; }
.picker button { display: flex; align-items: center; justify-content: center; width: 52px; height: 33px; color: #5b6478; }
.picker button.on { background: #bbc0cd; }
.rule { width: 1px; height: 60px; margin: 56px 0 0 169px; background: linear-gradient(transparent, #999 50%, transparent); }

.status { position: relative; display: flex; align-items: center; justify-content: flex-end; height: 33px; flex: none; margin: 0 -1px; padding: 0 28px 3px 0; background: #5b6478; color: #d5d8df; }
.status::before { content: ""; position: absolute; top: 0; right: 16px; width: 376px; height: 12px; background: linear-gradient(#fff8, #fff0); mask-image: linear-gradient(90deg, transparent, #000 12%, #0008 50%, transparent); }
.status input { appearance: none; width: 90px; height: 14px; margin: 0 5px 0 8px; background: linear-gradient(#cdd1d9, #cdd1d9) center / 100% 2px no-repeat; }
.status input::-webkit-slider-thumb { appearance: none; width: 5px; height: 13px; background: #fff; }
.pct { margin: 0 8px 0 11px; font: 12px/16px "Noto Sans", sans-serif; }
.dim { color: #858c9c; }
.status .arrow + .flat, .status .flat + .flat { margin-left: 5px; }
.grip { position: absolute; right: 2px; bottom: 3px; }
</style>
